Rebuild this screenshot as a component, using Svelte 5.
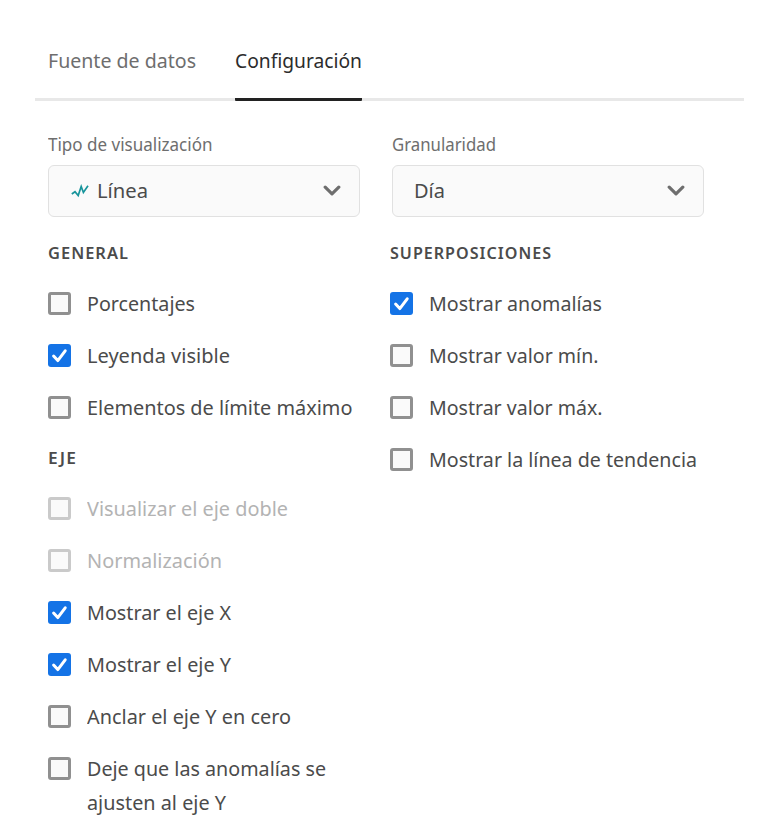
<script>
  const general = [
    { lines: [['Porcentajes', 108]] },
    { lines: [['Leyenda visible', 143]], checked: true },
    { lines: [['Elementos de límite máximo', 265.5]] }
  ];
  const axis = [
    { lines: [['Visualizar el eje doble', 201]], disabled: true },
    { lines: [['Normalización', 135]], disabled: true },
    { lines: [['Mostrar el eje X', 144]], checked: true },
    { lines: [['Mostrar el eje Y', 144]], checked: true },
    { lines: [['Anclar el eje Y en cero', 204]] },
    { lines: [['Deje que las anomalías se', 239], ['ajusten al eje Y', 139]] }
  ];
  const overlays = [
    { lines: [['Mostrar anomalías', 173]], checked: true },
    { lines: [['Mostrar valor mín.', 169.5]] },
    { lines: [['Mostrar valor máx.', 173.5]] },
    { lines: [['Mostrar la línea de tendencia', 268]] }
  ];

  // Condenses a label horizontally to its nominal width.
  function fit(node, width) {
    node.style.transform = `scaleX(${width / node.getBoundingClientRect().width})`;
  }
</script>

{#snippet label(text, width)}
  <span class="fit" style:width="{width}px"><span class="ink" use:fit={width}>{text}</span></span>
{/snippet}

{#snippet chevron()}
  <svg class="chevron" width="18" height="12" viewBox="0 0 18 12"><path d="M2.2 2.2 9 8.9 15.8 2.2" /></svg>
{/snippet}

{#snippet options(items)}
  {#each items as item}
    <label class="option" class:disabled={item.disabled}>
      <span class="box" class:checked={item.checked}>
        {#if item.checked}
          <svg width="23" height="23" viewBox="0 0 23 23"><path d="M5.6 12 9.8 16.6 17.2 6.8" /></svg>
        {/if}
      </span>
      <span class="lines">
        {#each item.lines as [text, width]}
          {@render label(text, width)}
        {/each}
      </span>
    </label>
  {/each}
{/snippet}

<main>
  <nav>
    <div class="tab">{@render label('Fuente de datos', 148)}</div>
    <div class="tab active">{@render label('Configuración', 127)}</div>
  </nav>
  <div class="columns">
    <section>
      <div class="caption">{@render label('Tipo de visualización', 164.5)}</div>
      <div class="select">
        <svg class="spark" width="18" height="14" viewBox="0 0 18 14"><path d="M.8 10 4 7.7 7.2 11.6 10.2 2.5 12.4 8.5 17 1.8" /></svg>
        {@render label('Línea', 51)}
        {@render chevron()}
      </div>
      <h2>{@render label('GENERAL', 81)}</h2>
      {@render options(general)}
      <h2 class="second">{@render label('EJE', 29)}</h2>
      {@render options(axis)}
    </section>
    <section class="right">
      <div class="caption">{@render label('Granularidad', 104)}</div>
      <div class="select day">
        {@render label('Día', 31)}
        {@render chevron()}
      </div>
      <h2>{@render label('SUPERPOSICIONES', 162)}</h2>
      {@render options(overlays)}
    </section>
  </div>
</main>

<style>
  :global(body) { background: #fff; }
  main {
    width: 757px;
    height: 829px;
    overflow: hidden;
    box-sizing: border-box;
    padding-top: 36px;
    font: 20.5px/34px "Noto Sans", "Open Sans", sans-serif;
    color: #4b4b4b;
  }
  .fit { display: block; flex: none; white-space: nowrap; }
  .ink { display: inline-block; transform-origin: 0 50%; }
  nav {
    display: flex;
    gap: 39px;
    height: 62px;
    margin: 0 13px 0 35px;
    padding-left: 13px;
    border-bottom: 3px solid #e8e8e8;
  }
  .tab { height: 65px; line-height: 49px; color: #6e6e6e; box-sizing: border-box; }
  .active { color: #2c2c2c; border-bottom: 3px solid #222; border-radius: 1px; }
  .columns { display: flex; gap: 29.5px; padding: 30px 0 0 48px; }
  section { width: 312px; }
  .right .caption, .right .select { margin-left: 2.5px; }
  .caption { height: 34px; line-height: 26px; font-size: 17.5px; color: #6e6e6e; }
  .select {
    display: flex;
    align-items: center;
    box-sizing: border-box;
    width: 312px;
    height: 52px;
    padding: 0 18.5px 0 22px;
    border: 1px solid #e1e1e1;
    border-radius: 6px;
    background: #fafafa;
  }
  .select .fit { margin-top: -2px; }
  .day { padding-left: 21px; }
  .spark { margin-right: 8px; fill: none; stroke: #17949b; stroke-width: 1.7; }
  .chevron { margin-left: auto; fill: none; stroke: #6e6e6e; stroke-width: 3.2; stroke-linecap: round; stroke-linejoin: round; }
  h2 { margin: 23px 0 20px; height: 26px; font-size: 16px; line-height: 26px; font-weight: 600; letter-spacing: 1px; }
  h2.second { margin: 3px 0 20px; }
  .option { display: flex; gap: 16px; min-height: 34px; padding-bottom: 18px; }
  .box {
    flex: none;
    box-sizing: border-box;
    width: 23px;
    height: 23px;
    margin-top: 6px;
    border: 3px solid #909090;
    border-radius: 3px;
    background: #fafafa;
  }
  .checked { border: 0; background: #1473e6; }
  .box svg { display: block; fill: none; stroke: #fff; stroke-width: 3; stroke-linecap: round; stroke-linejoin: round; }
  .disabled { color: #b3b3b3; }
  .disabled .box { border-color: #cacaca; }
</style>
